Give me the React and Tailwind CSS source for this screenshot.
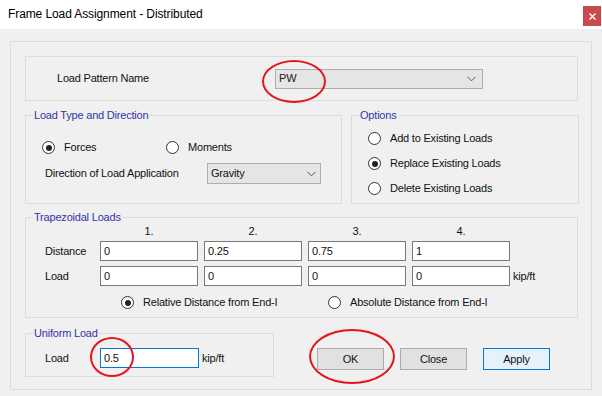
import React from "react";

const Radio = ({ checked }) => (
  <span className="w-[13px] h-[13px] rounded-full border border-[#333333] bg-white flex items-center justify-center shrink-0">
    {checked && <span className="w-[6px] h-[6px] rounded-full bg-[#222222]" />}
  </span>
);

const Chevron = () => (
  <svg width="9" height="6" viewBox="0 0 9 6" className="shrink-0">
    <path d="M0.5 0.8 L4.5 4.8 L8.5 0.8" fill="none" stroke="#555" strokeWidth="1" />
  </svg>
);

const Input = ({ value, className = "" }) => (
  <div className={"h-[20px] bg-white border border-[#7a7a7a] flex items-center pl-[3px] " + className}>
    {value}
  </div>
);

const GroupTitle = ({ children }) => (
  <span className="absolute left-[7px] top-[-8px] px-[1px] bg-[#f0f0f0] text-[#3434a8] leading-[14px]">
    {children}
  </span>
);

export default function App() {
  return (
    <div
      className="w-[602px] h-[396px] bg-white relative overflow-hidden text-[11px] tracking-[-0.2px] text-[#111]"
      style={{ fontFamily: '"Liberation Sans", Arial, sans-serif' }}
    >
      {/* Title bar */}
      <div className="h-[29px] flex items-start justify-between">
        <span className="pl-[8px] pt-[7px] text-[12px] leading-[14px] tracking-[-0.1px] text-[#000]">
          Frame Load Assignment - Distributed
        </span>
        <div className="mt-[6px] mr-[1px] w-[18px] h-[20px] bg-[#c94a4a] flex items-center justify-center">
          <svg width="7" height="7" viewBox="0 0 7 7">
            <path d="M0.5 0.5 L6.5 6.5 M6.5 0.5 L0.5 6.5" stroke="#fff" strokeWidth="1.4" />
          </svg>
        </div>
      </div>

      {/* Body */}
      <div className="h-[367px] bg-[#f0f0f0] px-[10px] pt-[12px]">
        <div className="w-[582px] h-[349px] border border-[#dcdcdc] pl-[14px] pt-[14px] flex flex-col">
          {/* Load pattern */}
          <div className="w-[553px] h-[45px] border border-[#dcdcdc] flex items-center pl-[31px]">
            <span className="w-[218px]">Load Pattern Name</span>
            <div className="w-[208px] h-[20px] bg-[#e5e5e5] border border-[#adadad] flex items-center justify-between pl-[3px] pr-[6px] text-[#1a1a1a]">
              <span>PW</span>
              <Chevron />
            </div>
          </div>

          {/* Row 2 */}
          <div className="mt-[14px] flex gap-[9px]">
            <div className="relative w-[317px] h-[89px] border border-[#dcdcdc] pt-[25px]">
              <GroupTitle>Load Type and Direction</GroupTitle>
              <div className="flex items-center pl-[16px] h-[13px]">
                <div className="w-[124px] flex items-center">
                  <Radio checked />
                  <span className="ml-[9px]">Forces</span>
                </div>
                <div className="flex items-center">
                  <Radio />
                  <span className="ml-[9px]">Moments</span>
                </div>
              </div>
              <div className="mt-[9px] flex items-center pl-[19px]">
                <span className="w-[162px]">Direction of Load Application</span>
                <div className="w-[114px] h-[21px] bg-[#e5e5e5] border border-[#adadad] flex items-center justify-between pl-[3px] pr-[4px]">
                  <span>Gravity</span>
                  <Chevron />
                </div>
              </div>
            </div>

            <div className="relative w-[228px] h-[89px] border border-[#dcdcdc] pt-[16px] pl-[16px] flex flex-col gap-[12px]">
              <GroupTitle>Options</GroupTitle>
              <div className="flex items-center h-[13px]">
                <Radio />
                <span className="ml-[9px]">Add to Existing Loads</span>
              </div>
              <div className="flex items-center h-[13px]">
                <Radio checked />
                <span className="ml-[9px]">Replace Existing Loads</span>
              </div>
              <div className="flex items-center h-[13px]">
                <Radio />
                <span className="ml-[9px]">Delete Existing Loads</span>
              </div>
            </div>
          </div>

          {/* Trapezoidal */}
          <div className="relative mt-[13px] w-[553px] h-[101px] border border-[#dcdcdc] pt-[6px]">
            <GroupTitle>Trapezoidal Loads</GroupTitle>
            <div className="ml-[74px] flex gap-[6px] h-[14px] items-center">
              {["1.", "2.", "3.", "4."].map((h) => (
                <span key={h} className="w-[98px] text-center">{h}</span>
              ))}
            </div>
            <div className="mt-[3px] flex items-center pl-[19px]">
              <span className="w-[55px]">Distance</span>
              <div className="flex gap-[6px]">
                <Input value="0" className="w-[98px]" />
                <Input value="0.25" className="w-[98px]" />
                <Input value="0.75" className="w-[98px]" />
                <Input value="1" className="w-[98px]" />
              </div>
            </div>
            <div className="mt-[5px] flex items-center pl-[19px]">
              <span className="w-[55px]">Load</span>
              <div className="flex gap-[6px]">
                <Input value="0" className="w-[98px]" />
                <Input value="0" className="w-[98px]" />
                <Input value="0" className="w-[98px]" />
                <Input value="0" className="w-[98px]" />
              </div>
              <span className="ml-[3px]">kip/ft</span>
            </div>
            <div className="mt-[10px] flex items-center pl-[95px] h-[13px]">
              <div className="w-[207px] flex items-center">
                <Radio checked />
                <span className="ml-[9px]">Relative Distance from End-I</span>
              </div>
              <div className="flex items-center">
                <Radio />
                <span className="ml-[9px]">Absolute Distance from End-I</span>
              </div>
            </div>
          </div>

          {/* Bottom row */}
          <div className="mt-[15px] flex items-start">
            <div className="relative w-[249px] h-[44px] border border-[#dcdcdc] pt-[14px] pl-[19px]">
              <GroupTitle>Uniform Load</GroupTitle>
              <div className="flex items-center">
                <span className="w-[55px]">Load</span>
                <div className="w-[99px] h-[20px] bg-white border border-[#0078d7] flex items-center pl-[3px]">0.5</div>
                <span className="ml-[3px]">kip/ft</span>
              </div>
            </div>
            <div className="ml-[43px] mt-[15px] flex gap-[16px]">
              <div className="w-[67px] h-[22px] bg-[#e1e1e1] border border-[#adadad] flex items-center justify-center">OK</div>
              <div className="w-[67px] h-[22px] bg-[#e1e1e1] border border-[#adadad] flex items-center justify-center">Close</div>
              <div className="w-[67px] h-[22px] bg-[#e5f1fb] border border-[#0078d7] flex items-center justify-center">Apply</div>
            </div>
          </div>
        </div>
      </div>

      {/* Red annotation ellipses */}
      <div className="absolute left-[262px] top-[60px] w-[64px] h-[43px] rounded-[50%] border-2 border-[#e3161c]" />
      <div className="absolute left-[90px] top-[337px] w-[44px] h-[40px] rounded-[50%] border-2 border-[#e3161c]" />
      <div className="absolute left-[309px] top-[329px] w-[86px] h-[55px] rounded-[50%] border-2 border-[#e3161c]" />
    </div>
  );
}
